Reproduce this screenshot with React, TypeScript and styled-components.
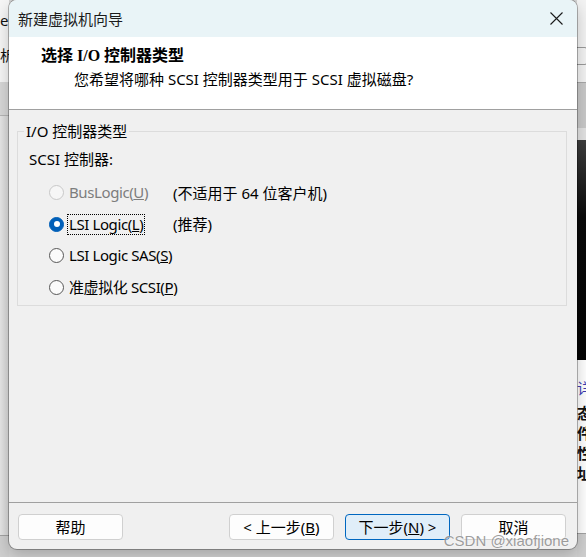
import React from "react";
import styled, { createGlobalStyle } from "styled-components";

const UI_FONT = `"Noto Sans", "Noto Sans CJK SC", sans-serif`;

const GlobalStyle = createGlobalStyle`
  html, body {
    margin: 0;
    padding: 0;
    background: #d2d2d2;
  }
  body {
    overflow: hidden;
    font-family: ${UI_FONT};
  }
`;

const Desktop = styled.div`
  position: relative;
  display: flex;
  width: 586px;
  height: 557px;
  overflow: hidden;
  background: #d2d2d2;
`;

const SideStrip = styled.div`
  width: 9px;
  flex-shrink: 0;
  display: flex;
  flex-direction: column;
  overflow: hidden;
`;

const StripBlock = styled.div<{ $h: number; $bg: string; $pad?: number }>`
  height: ${(p) => p.$h}px;
  flex-shrink: 0;
  background: ${(p) => p.$bg};
  padding-top: ${(p) => p.$pad ?? 0}px;
  box-sizing: border-box;
  overflow: hidden;
  white-space: nowrap;
`;

const StripText = styled.div<{ $color?: string; $gap?: number; $bold?: boolean }>`
  font-size: 15px;
  line-height: 20px;
  height: 20px;
  margin-top: ${(p) => p.$gap ?? 0}px;
  color: ${(p) => p.$color ?? "#111"};
  font-weight: ${(p) => (p.$bold ? 700 : 400)};
`;

const StripIcon = styled.div`
  margin: 47px 0 0 -4px;
  width: 14px;
  height: 18px;
  border: 1px solid #9a9a9a;
  border-radius: 2px;
  box-sizing: border-box;
`;

const Window = styled.div`
  width: 568px;
  height: 549px;
  flex-shrink: 0;
  display: flex;
  flex-direction: column;
  border-radius: 8px;
  overflow: hidden;
  background: #f0f0f0;
  box-shadow: 0 0 0 1px rgba(0, 0, 0, 0.28), 0 6px 16px rgba(0, 0, 0, 0.22);
  z-index: 1;
`;

const TitleBar = styled.div`
  height: 37px;
  flex-shrink: 0;
  display: flex;
  align-items: center;
  justify-content: space-between;
  padding-left: 9px;
  background: #e9f4f7;
`;

const TitleText = styled.span`
  font-size: 15px;
  color: #1b1b1b;
`;

const CloseButton = styled.div`
  width: 42px;
  height: 37px;
  display: flex;
  align-items: center;
  justify-content: center;
`;

const Header = styled.div`
  height: 73px;
  flex-shrink: 0;
  box-sizing: border-box;
  background: #ffffff;
  border-bottom: 1px solid #a0a0a0;
  padding-top: 9px;
`;

const HeaderTitle = styled.div`
  padding-left: 32px;
  font-family: "Liberation Serif", "Noto Sans CJK SC", serif;
  font-weight: 700;
  font-size: 16px;
  line-height: 20px;
  color: #000;
`;

const HeaderSub = styled.div`
  margin-top: 3px;
  padding-left: 65px;
  font-size: 15px;
  line-height: 20px;
  color: #000;
`;

const Body = styled.div`
  flex: 1;
  padding: 11px 10px 0 8px;
`;

const GroupBox = styled.fieldset`
  margin: 0;
  padding: 0;
  border: 1px solid #dcdcdc;
`;

const GroupLegend = styled.legend`
  margin-left: 6px;
  padding: 0 2px;
  font-size: 15px;
  line-height: 20px;
  color: #000;
`;

const GroupContent = styled.div`
  padding: 8px 0 2px 11px;
`;

const FieldLabel = styled.div`
  font-size: 15px;
  line-height: 20px;
  color: #000;
`;

const RadioList = styled.div`
  margin-top: 8px;
  padding-left: 20px;
  display: grid;
  grid-template-columns: 124px auto;
  grid-auto-rows: 31.5px;
  align-items: center;
`;

const RadioCell = styled.div`
  display: flex;
  align-items: center;
  gap: 5px;
`;

const RadioDot = styled.span<{ $checked?: boolean; $disabled?: boolean }>`
  width: 15px;
  height: 15px;
  box-sizing: border-box;
  border-radius: 50%;
  flex-shrink: 0;
  display: flex;
  align-items: center;
  justify-content: center;
  border: 1px solid
    ${(p) => (p.$checked ? "#005fb8" : p.$disabled ? "#c8c8c8" : "#575757")};
  background: ${(p) =>
    p.$checked ? "#005fb8" : p.$disabled ? "#f6f6f6" : "#fbfbfb"};

  &::after {
    content: "";
    display: ${(p) => (p.$checked ? "block" : "none")};
    width: 6px;
    height: 6px;
    border-radius: 50%;
    background: #ffffff;
  }
`;

const RadioText = styled.span<{ $disabled?: boolean; $focused?: boolean }>`
  font-size: 15px;
  line-height: 19px;
  letter-spacing: -0.4px;
  color: ${(p) => (p.$disabled ? "#7d7d7d" : "#000")};
  outline: ${(p) => (p.$focused ? "1px dotted #000" : "none")};
  padding: 0 1px;
  margin-left: -1px;
  white-space: nowrap;
`;

const NoteText = styled.span`
  font-size: 15px;
  line-height: 20px;
  color: #000;
  white-space: nowrap;
`;

const Footer = styled.div`
  height: 47px;
  flex-shrink: 0;
  box-sizing: border-box;
  border-top: 1px solid #a0a0a0;
  display: flex;
  align-items: flex-start;
  gap: 11px;
  padding: 11px 11px 0 9px;
`;

const Spacer = styled.div`
  flex: 1;
`;

const Button = styled.div<{ $primary?: boolean }>`
  width: 105px;
  height: 26px;
  box-sizing: border-box;
  display: flex;
  align-items: center;
  justify-content: center;
  border-radius: 4px;
  border: 1px solid ${(p) => (p.$primary ? "#0067c0" : "#d0d0d0")};
  background: ${(p) => (p.$primary ? "#e0eef9" : "#fdfdfd")};
  font-size: 15px;
  line-height: 20px;
  color: #000;
  white-space: pre;
`;

const Watermark = styled.div`
  position: absolute;
  right: 17px;
  bottom: 7px;
  z-index: 2;
  font-family: "Liberation Sans", Arial, sans-serif;
  font-size: 15px;
  line-height: 18px;
  color: rgba(125, 125, 125, 0.75);
  text-shadow: 0 0 2px rgba(255, 255, 255, 0.9);
`;

const CloseIcon = () => (
  <svg width="13" height="13" viewBox="0 0 13 13">
    <path d="M0.5 0.5 L12.5 12.5 M12.5 0.5 L0.5 12.5" stroke="#1a1a1a" strokeWidth="1.1" />
  </svg>
);

const options = [
  { label: "BusLogic(", key: "U", note: "(不适用于 64 位客户机)", disabled: true },
  { label: "LSI Logic(", key: "L", note: "(推荐)", checked: true },
  { label: "LSI Logic SAS(", key: "S" },
  { label: "准虚拟化 SCSI(", key: "P" },
];

export default function App() {
  return (
    <>
      <GlobalStyle />
      <Desktop>
        <SideStrip>
          <StripBlock $h={82} $bg="#f6f6f6" $pad={10}>
            <StripText>e V</StripText>
            <StripText $gap={15}>析</StripText>
          </StripBlock>
          <StripBlock $h={33} $bg="#d7d7d7" />
          <StripBlock $h={1} $bg="#b5b5b5" />
          <StripBlock $h={419} $bg="linear-gradient(90deg, #e6e6e6, #d6d6d6)" />
          <StripBlock $h={1} $bg="#a2a2a2" />
          <StripBlock $h={21} $bg="#cfcfcf" />
        </SideStrip>

        <Window>
          <TitleBar>
            <TitleText>新建虚拟机向导</TitleText>
            <CloseButton>
              <CloseIcon />
            </CloseButton>
          </TitleBar>

          <Header>
            <HeaderTitle>选择 I/O 控制器类型</HeaderTitle>
            <HeaderSub>您希望将哪种 SCSI 控制器类型用于 SCSI 虚拟磁盘?</HeaderSub>
          </Header>

          <Body>
            <GroupBox>
              <GroupLegend>I/O 控制器类型</GroupLegend>
              <GroupContent>
                <FieldLabel>SCSI 控制器:</FieldLabel>
                <RadioList>
                  {options.map((o) => (
                    <React.Fragment key={o.key}>
                      <RadioCell>
                        <RadioDot $checked={o.checked} $disabled={o.disabled} />
                        <RadioText $disabled={o.disabled} $focused={o.checked}>
                          {o.label}
                          <u>{o.key}</u>)
                        </RadioText>
                      </RadioCell>
                      <NoteText>{o.note ?? ""}</NoteText>
                    </React.Fragment>
                  ))}
                </RadioList>
              </GroupContent>
            </GroupBox>
          </Body>

          <Footer>
            <Button>帮助</Button>
            <Spacer />
            <Button>
              {"< 上一步("}
              <u>B</u>)
            </Button>
            <Button $primary>
              下一步(<u>N</u>
              {") >"}
            </Button>
            <Button>取消</Button>
          </Footer>
        </Window>

        <SideStrip>
          <StripBlock $h={82} $bg="#f3f3f3">
            <StripIcon />
          </StripBlock>
          <StripBlock $h={1} $bg="#a8a8a8" />
          <StripBlock $h={45} $bg="#c9c9c9" />
          <StripBlock $h={12} $bg="#e2e2e2" />
          <StripBlock $h={220} $bg="linear-gradient(180deg, #3e3e3e 0%, #0a0a0a 35%, #030303 100%)" />
          <StripBlock $h={173} $bg="#ffffff" $pad={18}>
            <StripText $color="#3c3cb4">详</StripText>
            <StripText $gap={5} $bold>态</StripText>
            <StripText $bold>件</StripText>
            <StripText $bold>性</StripText>
            <StripText $bold>址</StripText>
          </StripBlock>
          <StripBlock $h={1} $bg="#a2a2a2" />
          <StripBlock $h={23} $bg="#cfcfcf" />
        </SideStrip>

        <Watermark>CSDN @xiaofjione</Watermark>
      </Desktop>
    </>
  );
}
